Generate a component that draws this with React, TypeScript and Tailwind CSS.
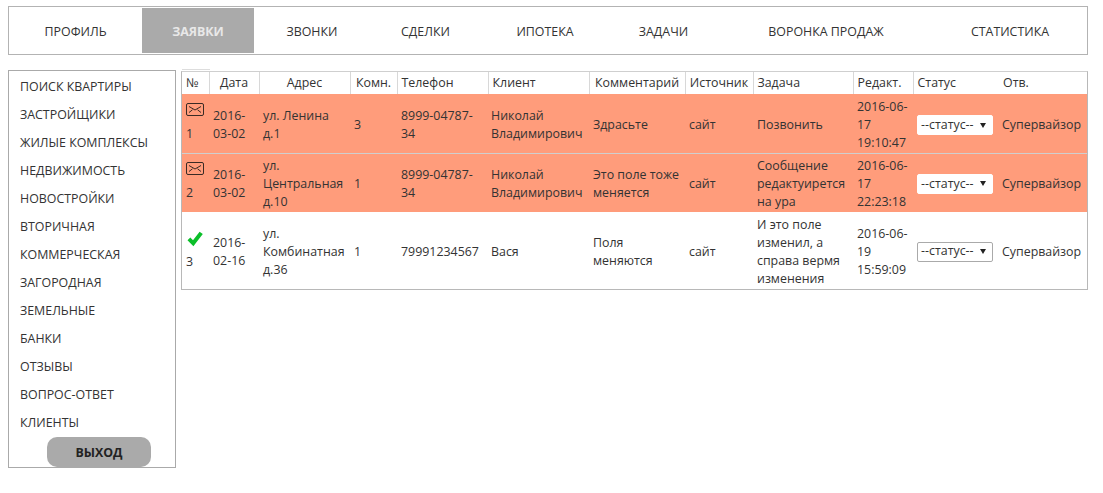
const navItems: [string, string, boolean?][] = [
  ["ПРОФИЛЬ", "w-[133px]"],
  ["ЗАЯВКИ", "w-[112px]", true],
  ["ЗВОНКИ", "w-[116px]"],
  ["СДЕЛКИ", "w-[111px]"],
  ["ИПОТЕКА", "w-[128px]"],
  ["ЗАДАЧИ", "w-[109px]"],
  ["ВОРОНКА ПРОДАЖ", "w-[216px]"],
  ["СТАТИСТИКА", "w-[152px]"],
];

const side = [
  "ПОИСК КВАРТИРЫ",
  "ЗАСТРОЙЩИКИ",
  "ЖИЛЫЕ КОМПЛЕКСЫ",
  "НЕДВИЖИМОСТЬ",
  "НОВОСТРОЙКИ",
  "ВТОРИЧНАЯ",
  "КОММЕРЧЕСКАЯ",
  "ЗАГОРОДНАЯ",
  "ЗЕМЕЛЬНЫЕ",
  "БАНКИ",
  "ОТЗЫВЫ",
  "ВОПРОС-ОТВЕТ",
  "КЛИЕНТЫ",
];

const cols = [
  ["№", "w-[27px]", "text-left"],
  ["Дата", "w-[50px]", "text-center"],
  ["Адрес", "w-[91px]", "text-center"],
  ["Комн.", "w-[47px]", "text-center"],
  ["Телефон", "w-[91px]", "text-left"],
  ["Клиент", "w-[101px]", "text-left"],
  ["Комментарий", "w-[96px]", "text-center"],
  ["Источник", "w-[68px]", "text-center"],
  ["Задача", "w-[100px]", "text-left"],
  ["Редакт.", "w-[60px]", "text-left"],
  ["Статус", "w-[86px]", "text-left"],
  ["Отв.", "w-[88px]", "text-left"],
];

const rows = [
  {
    id: 1, icon: "mail", date: "2016-03-02", addr: ["ул. Ленина", "д.1"], rooms: "3", phone: ["8999-04787-", "34"],
    client: ["Николай", "Владимирович"], comment: ["Здрасьте"], source: "сайт", task: ["Позвонить"],
    edited: ["2016-06-", "17", "19:10:47"], bg: "bg-[#ff9c7b]", h: "h-[59px] [&>td]:pt-[4px]", sel: "border-white",
  },
  {
    id: 2, icon: "mail", date: "2016-03-02", addr: ["ул.", "Центральная", "д.10"], rooms: "1", phone: ["8999-04787-", "34"],
    client: ["Николай", "Владимирович"], comment: ["Это поле тоже", "меняется"], source: "сайт",
    task: ["Сообщение", "редактуирется", "на ура"], edited: ["2016-06-", "17", "22:23:18"], bg: "bg-[#ff9c7b]", h: "h-[59px] [&>td]:pt-[2px]", sel: "border-white",
  },
  {
    id: 3, icon: "check", date: "2016-02-16", addr: ["ул.", "Комбинатная", "д.36"], rooms: "1", phone: ["79991234567"],
    client: ["Вася"], comment: ["Поля", "меняются"], source: "сайт",
    task: ["И это поле", "изменил, а", "справа вермя", "изменения"], edited: ["2016-06-", "19", "15:59:09"], bg: "bg-white", h: "h-[77px] [&>td]:pt-[2px]", sel: "border-[#aaaaaa]",
  },
];

function Mail() {
  return (
    <svg width="18" height="13" viewBox="0 0 18 13" fill="none" stroke="#3a2a24" strokeWidth="1" className="block">
      <rect x="0.5" y="0.5" width="17" height="12" rx="1.5" />
      <path d="M3 3.5 9 7 15 3.5M3 9.5 6.5 6.8M15 9.5 11.5 6.8" />
    </svg>
  );
}

function Check() {
  return (
    <svg width="16" height="16" viewBox="0 0 16 16" className="block ml-px">
      <path d="M0.5 9.2 3.3 6.6 6 9.2 12.6 0.8 15.8 3 6.4 15.2Z" fill="#0bbf2a" />
    </svg>
  );
}

function Lines({ items }: { items: string[] }) {
  return (
    <>
      {items.map((t) => (
        <div key={t}>{t}</div>
      ))}
    </>
  );
}

export default function App() {
  return (
    <div className="w-[1103px] h-[493px] pt-[6px] bg-white text-[#333] text-[12.4px] leading-[18px] font-['Open_Sans',sans-serif] overflow-hidden">
      <div className="ml-2 w-[1080px] h-[49px] border border-[#b3b3b3] flex items-stretch py-px">
        {navItems.map(([label, w, active]) => (
          <div
            key={label}
            className={`${w} flex items-center justify-center pt-[2px] ${active ? "bg-[#aaaaaa] text-[#e8e8e8] font-bold" : ""}`}
          >
            {label}
          </div>
        ))}
      </div>
      <div className="flex items-start mt-[15px] ml-2">
        <div className="w-[168px] h-[398px] border border-[#aaaaaa] flex flex-col pl-[11px] pt-[2px]">
          {side.map((s) => (
            <div key={s} className="h-[28px] leading-[28px] shrink-0">
              {s}
            </div>
          ))}
          <button className="ml-[27px] w-[104px] h-[30px] pt-[2px] rounded-[10px] bg-[#aaaaaa] font-bold text-[#222] text-[12.4px]">
            ВЫХОД
          </button>
        </div>
        <div className="ml-[5px] mt-px w-[907px] border border-[#b8b8b8] border-t-[#cfcfcf] relative">
          <div className="absolute left-0 -top-[3px] w-[28px] h-px bg-[#dddddd]" />
          <table className="table-fixed w-[905px] border-collapse">
            <colgroup>
              {cols.map((c) => (
                <col key={c[0]} className={c[1]} />
              ))}
            </colgroup>
            <thead>
              <tr className="h-[22px]">
                {cols.map((c, i) => (
                  <th
                    key={c[0]}
                    className={`font-normal p-0 px-1 whitespace-nowrap ${c[2]} ${i < 10 ? "border-r border-[#d8d8d8]" : ""}`}
                  >
                    {c[0]}
                  </th>
                ))}
              </tr>
            </thead>
            <tbody>
              {rows.map((r, i) => (
                <tr key={r.id} className={`${r.bg} ${r.h} ${i === 0 ? "border-b border-[#cfcfcf]" : ""}`}>
                  <td className={`p-0 pl-1 align-middle ${r.icon === "mail" ? "pb-[4px]" : "pb-px"}`}>
                    {r.icon === "mail" ? <Mail /> : <Check />}
                    <div className={r.icon === "mail" ? "mt-[9px]" : "mt-[6px]"}>{r.id}</div>
                  </td>
                  <td className="p-0 pl-1 align-middle">{r.date}</td>
                  <td className="p-0 pl-1 align-middle">
                    <Lines items={r.addr} />
                  </td>
                  <td className="p-0 pl-1 align-middle">{r.rooms}</td>
                  <td className="p-0 pl-1 align-middle">
                    <Lines items={r.phone} />
                  </td>
                  <td className="p-0 pl-[3px] align-middle">
                    <Lines items={r.client} />
                  </td>
                  <td className="p-0 pl-1 align-middle">
                    <Lines items={r.comment} />
                  </td>
                  <td className="p-0 pl-1 align-middle">{r.source}</td>
                  <td className="p-0 pl-1 align-middle">
                    <Lines items={r.task} />
                  </td>
                  <td className="p-0 pl-1 align-middle">
                    <Lines items={r.edited} />
                  </td>
                  <td className="p-0 pl-1 align-middle">
                    <div className={`w-[76px] h-[20px] bg-white border ${r.sel} rounded-[2px] flex items-center justify-between pl-[3px] pr-[6px] text-[12.4px] leading-none`}>
                      <span>--статус--</span>
                      <span className="w-0 h-0 border-x-[3px] border-x-transparent border-t-[5px] border-t-[#222]" />
                    </div>
                  </td>
                  <td className="p-0 pl-[3px] align-middle">Супервайзор</td>
                </tr>
              ))}
            </tbody>
          </table>
        </div>
      </div>
    </div>
  );
}
